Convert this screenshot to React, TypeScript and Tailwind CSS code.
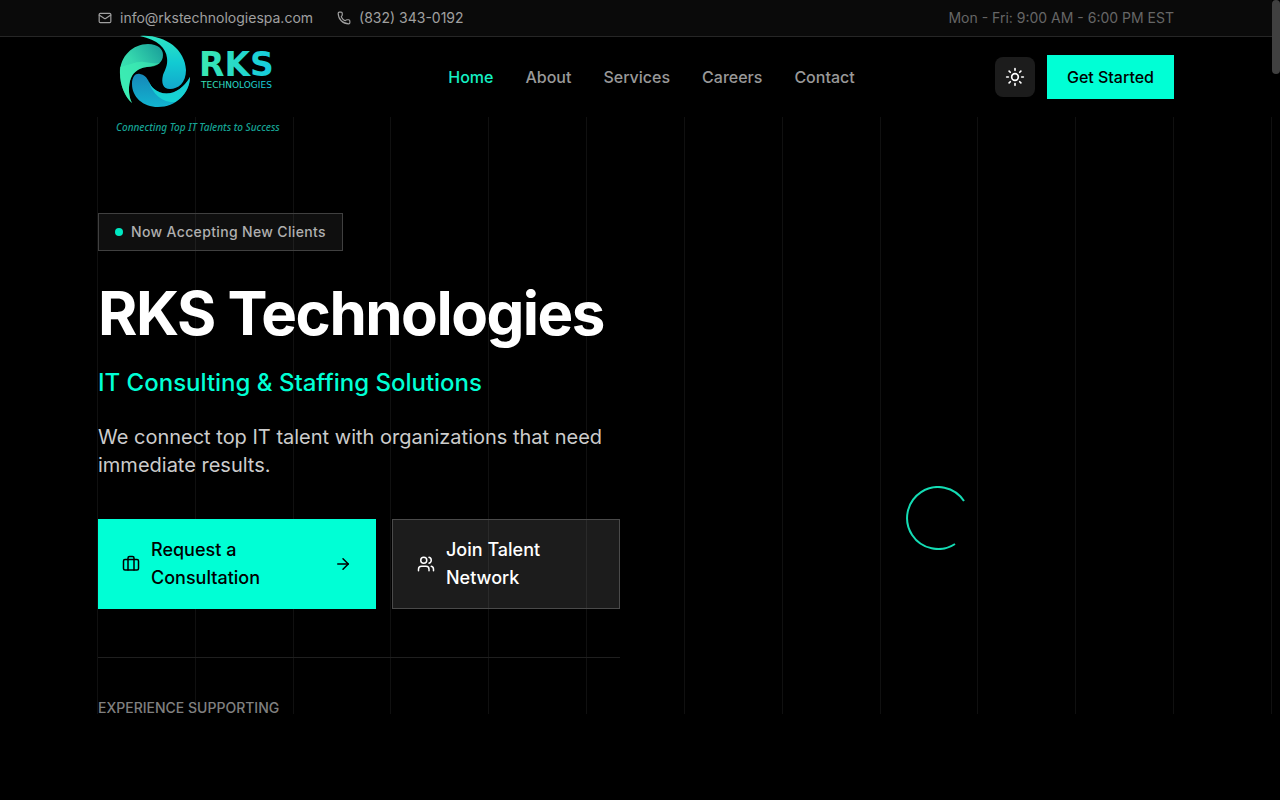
import { ArrowRight, Briefcase, Mail, Phone, Sun, Users } from "lucide-react";

const links = ["Home", "About", "Services", "Careers", "Contact"];
const columns = Array.from({ length: 13 }, (_, i) => i);

function Logo() {
  return (
    <svg viewBox="0 0 192 100" className="h-[100px] w-[192px] overflow-visible" role="img" aria-label="RKS Technologies">
      <defs>
        <linearGradient id="leaf" x1="0" y1="1" x2="1" y2="0">
          <stop offset="0" stopColor="#3cf0b4" />
          <stop offset="0.5" stopColor="#35d8ae" />
          <stop offset="1" stopColor="#179a98" />
        </linearGradient>
        <linearGradient id="sweep" x1="0" y1="0" x2="0" y2="1">
          <stop offset="0" stopColor="#2de5c4" />
          <stop offset="0.5" stopColor="#12cbd2" />
          <stop offset="1" stopColor="#12a8cc" />
        </linearGradient>
        <linearGradient id="wave" x1="0" y1="0" x2="0" y2="1">
          <stop offset="0" stopColor="#1687b8" />
          <stop offset="1" stopColor="#12b4d0" />
        </linearGradient>
        <linearGradient id="letters" x1="0" y1="0" x2="1" y2="0">
          <stop offset="0" stopColor="#3be8b0" />
          <stop offset="1" stopColor="#14cbe0" />
        </linearGradient>
      </defs>
      <path fill="url(#leaf)" d="M34 66C27 60 22 48 22 36C22 19 35 7 50 7C60 7 65 12 65 18C65 26 59 29 49 30C40 31 34 36 32 44C30 52 31 60 34 66Z" />
      <path fill="#3df0b4" opacity="0.6" d="M22 30C32 28 38 24 46 25C53 26 58 27 62 26C58 29 54 30 49 30C40 31 34 36 32 44C30 52 31 60 34 66C25 58 21 44 22 30Z" />
      <path fill="url(#sweep)" d="M42 -1C65 -3 87 11 88 33C88 46 80 52 72 52C65 52 63 46 65 38C67 33 70 28 69 21C68 11 60 3 42 -1Z" />
      <path fill="url(#wave)" d="M92 40C91 57 78 70 60 70C45 70 34 60 34 47C34 39 38 36 42 37C50 38 50 46 55 51C67 62 83 56 92 40Z" />
      <path fill="#18dcd6" opacity="0.8" d="M50 42C53 54 62 66 77 65C87 59 92 50 92 40C83 56 67 62 55 51C52 48 51 45 50 42Z" />
      <text x="101" y="39" fill="url(#letters)" fontFamily="'DejaVu Sans', sans-serif" fontWeight="700" fontSize="33">RKS</text>
      <text x="103" y="51" fill="url(#letters)" fontFamily="'DejaVu Sans', sans-serif" fontSize="9">TECHNOLOGIES</text>
      <text x="18" y="94" fill="#16a394" fontFamily="'Noto Sans', sans-serif" fontStyle="italic" fontWeight="500" fontSize="10">Connecting Top IT Talents to Success</text>
    </svg>
  );
}

export default function App() {
  return (
    <div className="flex min-h-screen bg-black font-['Inter',sans-serif] text-white">
      <div className="min-w-0 flex-1">
        <div className="border-b border-[#262626] bg-[#0a0a0a]">
          <div className="mx-auto flex h-9 max-w-[1140px] items-center justify-between px-8 text-sm">
            <div className="flex items-center gap-6 text-[#a0a0a0]">
              <a href="mailto:info@rkstechnologiespa.com" className="flex items-center gap-2">
                <Mail size={14} />
                info@rkstechnologiespa.com
              </a>
              <a href="tel:8323430192" className="flex items-center gap-2">
                <Phone size={14} />
                (832) 343-0192
              </a>
            </div>
            <p className="text-[#666666]">Mon - Fri: 9:00 AM - 6:00 PM EST</p>
          </div>
        </div>

        <header className="relative z-10 bg-black">
          <div className="mx-auto flex h-20 max-w-[1140px] items-center justify-between px-8">
            <a href="#home" className="flex h-full w-[210px] items-start">
              <Logo />
            </a>
            <nav className="flex gap-8 text-base font-medium">
              {links.map((link) => (
                <a
                  key={link}
                  href={`#${link.toLowerCase()}`}
                  className={link === "Home" ? "text-[#14f0c4]" : "text-[#999999]"}
                >
                  {link}
                </a>
              ))}
            </nav>
            <div className="flex items-center gap-3">
              <button aria-label="Toggle theme" className="flex size-10 items-center justify-center rounded-lg bg-[#1c1c1c]">
                <Sun size={20} />
              </button>
              <button className="h-11 bg-[#00ffd5] px-5 text-base font-medium text-black">Get Started</button>
            </div>
          </div>
        </header>

        <main className="relative">
          <div className="absolute inset-0 flex" aria-hidden="true">
            {columns.map((c) => (
              <div key={c} className="flex-1 border-r border-[#101010]" />
            ))}
          </div>
          <div className="relative mx-auto grid max-w-[1140px] grid-cols-2 gap-8 px-8 pt-24">
            <div>
              <div className="inline-flex h-[38px] items-center gap-2 border border-[#404040] bg-white/6 px-4 text-sm font-medium tracking-wide text-[#b0b0b0]">
                <span className="size-2 rounded-full bg-[#00e8c2]" />
                Now Accepting New Clients
              </div>
              <h1 className="mt-8 text-6xl leading-[60px] font-bold tracking-tight whitespace-nowrap">RKS Technologies</h1>
              <p className="mt-6 text-2xl font-medium text-[#00ffd5]">IT Consulting &amp; Staffing Solutions</p>
              <p className="mt-6 text-xl text-[#cccccc]">
                We connect top IT talent with organizations that need immediate results.
              </p>
              <div className="mt-10 flex gap-4 text-lg font-medium">
                <button className="flex h-[90px] w-[278px] items-center gap-[11px] bg-[#00ffd5] px-6 text-left text-black">
                  <Briefcase size={18} className="shrink-0" />
                  <span className="flex-1">Request a Consultation</span>
                  <ArrowRight size={18} />
                </button>
                <button className="flex h-[90px] flex-1 items-center gap-[11px] border border-[#4a4a4a] bg-white/11 px-6 text-left">
                  <Users size={18} className="shrink-0" />
                  <span className="w-24">Join Talent Network</span>
                </button>
              </div>
              <div className="mt-12 border-t border-[#1f1f1f] pt-10">
                <p className="-mb-1 text-sm font-medium text-[#808080]">EXPERIENCE SUPPORTING</p>
              </div>
            </div>
            <div className="flex items-center justify-center pt-27 pl-[50px]">
              <svg viewBox="0 0 64 64" className="size-16" fill="none" role="img" aria-label="Loading">
                <path d="M58 15A31 31 0 1 0 49 58" stroke="#14dcb4" strokeWidth="2" />
              </svg>
            </div>
          </div>
        </main>
      </div>
      <div className="w-2 bg-black" aria-hidden="true">
        <div className="h-[74px] rounded-full bg-[#404040]" />
      </div>
    </div>
  );
}
